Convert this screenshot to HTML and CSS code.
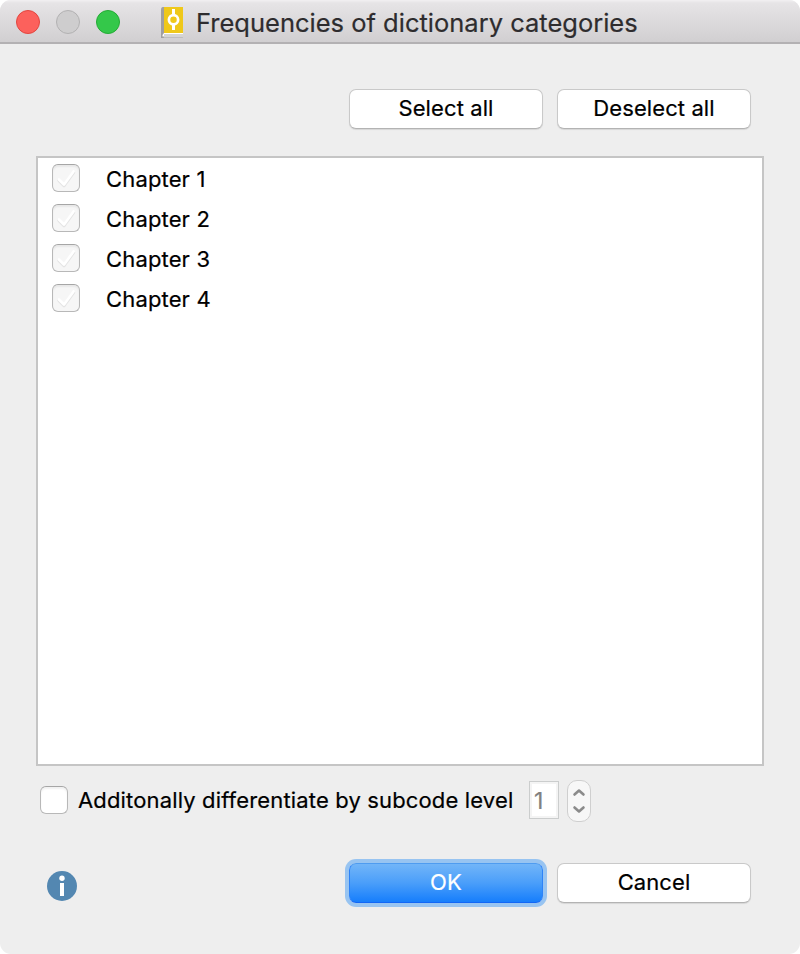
FILE: index.html
```html
<!DOCTYPE html>
<html lang="en">
<head>
<meta charset="utf-8">
<title>Frequencies of dictionary categories</title>
<link rel="stylesheet" href="styles.css">
</head>
<body>
<main class="window">
  <header class="titlebar">
    <div class="lights">
      <span class="light close"></span>
      <span class="light minimize"></span>
      <span class="light maximize"></span>
    </div>
    <svg class="book" width="24" height="32" viewBox="0 0 24 32">
      <path d="M2 0H5L3 27V31H0V3Q0 0 2 0Z" fill="#a09fa0"/>
      <path d="M3 0H22V26H3Z" fill="#efc81a"/>
      <path d="M3 26H22V30H3Q1 30 1.500 28Z" fill="#fff"/>
      <path d="M3 28H22M2 30H22" stroke="#aaa" stroke-width="1.200"/>
      <path d="M12.500 2V8M12.500 18V23" stroke="#fff" stroke-width="3"/>
      <circle cx="12.500" cy="12.800" r="4.600" fill="none" stroke="#fff" stroke-width="2.700"/>
    </svg>
    <h1 class="title"><span>Frequencies of dictionary categories</span></h1>
  </header>
  <div class="actions">
    <button class="button"><span>Select all</span></button>
    <button class="button"><span>Deselect all</span></button>
  </div>
  <div class="list">
    <div class="row"><span class="check disabled"><svg width="26" height="26" viewBox="0 0 26 26"><path class="tick-edge" d="M6 15.500L11 20.500L20.500 7.500"/><path class="tick" d="M6 14.500L11 19.500L20.500 6.500"/></svg></span><span class="label">Chapter 1</span></div>
    <div class="row"><span class="check disabled"><svg width="26" height="26" viewBox="0 0 26 26"><path class="tick-edge" d="M6 15.500L11 20.500L20.500 7.500"/><path class="tick" d="M6 14.500L11 19.500L20.500 6.500"/></svg></span><span class="label">Chapter 2</span></div>
    <div class="row"><span class="check disabled"><svg width="26" height="26" viewBox="0 0 26 26"><path class="tick-edge" d="M6 15.500L11 20.500L20.500 7.500"/><path class="tick" d="M6 14.500L11 19.500L20.500 6.500"/></svg></span><span class="label">Chapter 3</span></div>
    <div class="row"><span class="check disabled"><svg width="26" height="26" viewBox="0 0 26 26"><path class="tick-edge" d="M6 15.500L11 20.500L20.500 7.500"/><path class="tick" d="M6 14.500L11 19.500L20.500 6.500"/></svg></span><span class="label">Chapter 4</span></div>
  </div>
  <div class="option">
    <span class="check"></span>
    <span class="option-label">Additonally differentiate by subcode level</span>
    <span class="level">1</span>
    <span class="stepper"><svg width="22" height="40" viewBox="0 0 22 40"><path d="M6.500 13.500L11 9.500L15.500 13.500M6.500 26.500L11 30.500L15.500 26.500"/></svg></span>
  </div>
  <footer class="footer">
    <svg class="info" width="30" height="30" viewBox="0 0 30 30">
      <circle cx="15" cy="15" r="15" fill="#5387b1"/>
      <circle cx="15" cy="7.200" r="2.700" fill="#fff"/>
      <path d="M13 12H17V25H13Z" fill="#fff"/>
    </svg>
    <button class="button primary"><span>OK</span></button>
    <button class="button"><span>Cancel</span></button>
  </footer>
</main>
</body>
</html>
```
FILE: styles.css
```css
* { box-sizing: border-box; }

body {
  margin: 0;
  background: #fff;
  color: #000;
  font: 22px/28px Inter, "Liberation Sans", sans-serif;
  letter-spacing: .15px;
  -webkit-text-stroke: .2px;
}

.window {
  height: 954px;
  background: #eee;
  border-radius: 11px;
  overflow: hidden;
}

.titlebar {
  display: flex;
  height: 44px;
  padding-left: 16px;
  background: linear-gradient(#f2f0f2, #e6e4e6 3px, #d1cfd1 42px);
  border-bottom: 2px solid #b3b1b3;
}

.lights { display: flex; gap: 16px; padding-top: 10px; }

.light {
  width: 24px;
  height: 24px;
  border: 1px solid #e2463f;
  border-radius: 50%;
  background: #fc615c;
}
.minimize { background: #cecdce; border-color: #b2b1b2; }
.maximize { background: #34c84a; border-color: #24ab35; }

.book { margin: 7px 0 0 41px; }

.title {
  margin: 7px 0 0 11px;
  color: #2e2c2e;
  font-size: 25.500px;
  font-weight: 400;
  line-height: 32px;
  letter-spacing: 0;
  white-space: nowrap;
}

.actions {
  display: flex;
  justify-content: flex-end;
  gap: 14px;
  padding: 45px 49px 27px;
}

.button {
  width: 194px;
  height: 40px;
  padding: 0 0 2px;
  border: 1px solid #c9c9c9;
  border-bottom-color: #b3b3b3;
  border-radius: 7px;
  background: #fff;
  box-shadow: 0 1px 1px rgba(0, 0, 0, .1);
  color: #000;
  font: inherit;
  letter-spacing: .1px;
}

.list {
  height: 610px;
  margin: 0 36px;
  padding: 1px 0 0 14px;
  border: 2px solid #c5c5c5;
  background: #fff;
}

.row { display: flex; height: 40px; padding-top: 5px; }

.check {
  width: 28px;
  height: 28px;
  border: 1.500px solid #b8b8b8;
  border-top-color: #a6a6a6;
  border-radius: 6px;
  background: #fff;
  box-shadow: inset 0 2px 2px rgba(0, 0, 0, .06);
}
.disabled { background: #f6f6f6; }
.check svg { display: block; }
.check path { fill: none; stroke-linecap: round; stroke-linejoin: round; stroke-width: 2.800; }
.check .tick-edge { stroke: #e4e4e4; stroke-width: 3.400; }
.tick { stroke: #fff; }
.label { margin: 1px 0 0 26px; }

.option { display: flex; height: 42px; margin: 14px 0 0 40px; }
.option .check { margin-top: 6px; }
.option-label { width: 451px; padding: 6px 0 0 10px; white-space: nowrap; }

.level {
  width: 30px;
  height: 38px;
  margin: 1px 0 0 10px;
  padding: 5px 0 0 4px;
  border: 1.500px solid #cbcdcd;
  background: #fff;
  box-shadow: inset 0 0 0 2px #f4f4f4;
  color: #808080;
  font-size: 23px;
}

.stepper {
  width: 24px;
  height: 42px;
  margin-left: 8px;
  border: 1px solid #cfcfcf;
  border-radius: 10px;
  background: #f7f7f7;
}
.stepper path { fill: none; stroke: #8b8b8b; stroke-width: 2.600; stroke-linecap: round; stroke-linejoin: round; }

.footer { display: flex; align-items: flex-start; margin: 41px 49px 0 47px; }
.info { margin-top: 8px; }
.footer .button { margin-left: 14px; }
.footer .primary {
  margin-left: 272px;
  border-color: #4f9cf0 #2d83f8 #1266f5;
  background: linear-gradient(#72b5f8, #4a9efa 50%, #167efc);
  box-shadow: 0 0 0 4px #98c4f1;
  color: #fff;
}
```
